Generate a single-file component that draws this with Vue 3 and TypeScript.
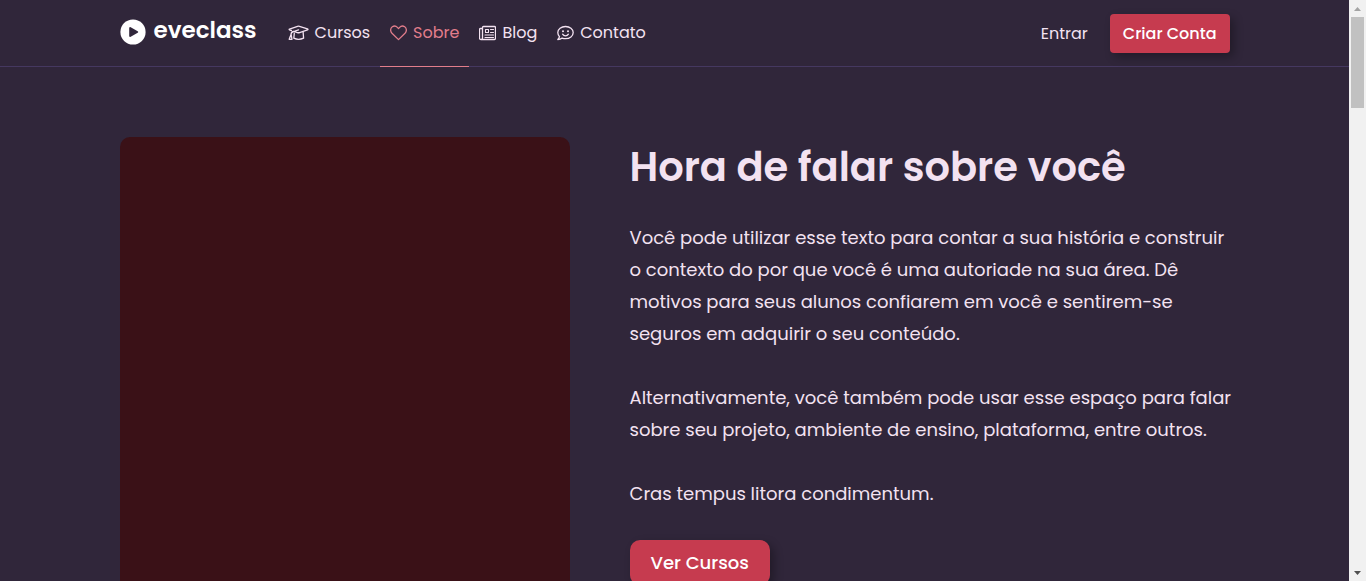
<script setup lang="ts">
interface NavItem {
  id: string
  label: string
  active: boolean
}

const navItems: NavItem[] = [
  { id: 'cursos', label: 'Cursos', active: false },
  { id: 'sobre', label: 'Sobre', active: true },
  { id: 'blog', label: 'Blog', active: false },
  { id: 'contato', label: 'Contato', active: false },
]

const paragraphs: string[][] = [
  [
    'Você pode utilizar esse texto para contar a sua história e construir',
    'o contexto do por que você é uma autoriade na sua área. Dê',
    'motivos para seus alunos confiarem em você e sentirem-se',
    'seguros em adquirir o seu conteúdo.',
  ],
  [
    'Alternativamente, você também pode usar esse espaço para falar',
    'sobre seu projeto, ambiente de ensino, plataforma, entre outros.',
  ],
  ['Cras tempus litora condimentum.'],
]
</script>

<template>
  <div class="shell">
    <div class="page">
      <header class="header">
        <div class="container bar">
          <a class="brand" href="#">
            <svg class="brand-mark" viewBox="0 0 26 26" aria-hidden="true">
              <circle cx="13" cy="13" r="12.6" fill="#fff" />
              <path d="M10.2 9v8l7-4z" fill="#30263a" stroke="#30263a" stroke-width="2" stroke-linejoin="round" />
            </svg>
            <span class="brand-name">eveclass</span>
          </a>

          <nav class="nav">
            <a
              v-for="item in navItems"
              :key="item.id"
              href="#"
              class="nav-link"
              :class="{ active: item.active }"
            >
              <svg v-if="item.id === 'cursos'" class="icon wide" viewBox="0 0 21 16" aria-hidden="true">
                <path d="M3.4 5.500Q.2 4.700 1.500 4.100L9.600 1.300q.9-.3 1.800 0l8.100 2.600q1 .5 0 1L11.600 7.600q-1.100.3-2.200 0L5.800 6.500 10.500 4.800" />
                <path d="M5.800 6.500Q3.100 6.800 3.100 9.300L1.200 14.300H4L3.100 9.300" />
                <path d="M6.300 8.200 5.800 13.200q4.700 2.300 9.800 0L15.100 7" />
              </svg>
              <svg v-else-if="item.id === 'sobre'" class="icon" viewBox="0 0 17 16" aria-hidden="true">
                <path d="M8.500 14.600 2 8.300C-.1 6.100.4 3.100 2.300 1.800c1.700-1.100 3.800-.8 5.100.6l1.100 1.200 1.100-1.200c1.300-1.400 3.400-1.700 5.100-.6 1.900 1.300 2.400 4.300.3 6.500z" />
              </svg>
              <svg v-else-if="item.id === 'blog'" class="icon" viewBox="0 0 17 16" aria-hidden="true">
                <path d="M4.500 1.500h11q1 0 1 1v11q0 1-1 1H2q-1.500 0-1.500-1.500V4.500q0-1 1-1h2v-1q0-1 1-1M3.500 3.500V13q0 1.500-1.500 1.500" />
                <path class="fine" d="M6.500 4.500h3v3h-3zM11.500 4.500h3M11.500 7.500h3M6 10h8.500M6 12.500h8.500" />
              </svg>
              <svg v-else class="icon" viewBox="0 0 17 16" aria-hidden="true">
                <path d="M8.500 1.500c4.300 0 7.700 2.700 7.700 6.100s-3.400 6.100-7.700 6.100c-1.200 0-2.300-.2-3.300-.6-1 .8-2.500 1.500-4.400 1.500 1-.9 1.500-1.900 1.700-2.900C1.400 10.600.8 9.100.8 7.600c0-3.400 3.400-6.100 7.700-6.100z" />
                <path d="M5.600 9.200c1.400 2.100 4.400 2.100 5.800 0" />
                <circle class="eye" cx="6" cy="6.200" r="1" />
                <circle class="eye" cx="11" cy="6.200" r="1" />
              </svg>
              <span>{{ item.label }}</span>
            </a>
          </nav>

          <div class="account">
            <a class="login" href="#">Entrar</a>
            <button class="btn signup" type="button">Criar Conta</button>
          </div>
        </div>
      </header>

      <main class="container about">
        <div class="photo"></div>
        <section class="copy">
          <h1>Hora de falar sobre você</h1>
          <p v-for="(lines, i) in paragraphs" :key="i">
            <template v-for="(line, j) in lines" :key="j"><br v-if="j > 0" />{{ line }}</template>
          </p>
          <button class="btn courses" type="button">Ver Cursos</button>
        </section>
      </main>
    </div>

    <div class="scrollbar" aria-hidden="true">
      <svg class="arrow" viewBox="0 0 17 17"><path d="M5 11h7L8.500 7z" fill="#a3a3a3" /></svg>
      <div class="thumb"></div>
      <svg class="arrow last" viewBox="0 0 17 17"><path d="M5 7h7l-3.500 4z" fill="#505050" /></svg>
    </div>
  </div>
</template>

<style>
body {
  margin: 0;
  background: #30263a;
}
</style>

<style scoped>
.shell {
  display: flex;
  height: 100vh;
  overflow: hidden;
  background: #30263a;
  color: #f3e2f1;
  font-family: Poppins, Inter, "Open Sans", sans-serif;
  font-size: 16px;
}

.page {
  flex: 1;
  min-width: 0;
  overflow: hidden;
}

.container {
  box-sizing: border-box;
  max-width: 1110px;
  margin: 0 auto;
}

.header {
  border-bottom: 1px solid #453860;
}

.bar {
  display: flex;
  height: 66px;
}

a {
  color: inherit;
  text-decoration: none;
}

.brand {
  display: flex;
  align-items: center;
  gap: 8px;
  height: 64px;
  margin-right: 21px;
  color: #fff;
}

.brand-mark {
  width: 26px;
  height: 26px;
}

.brand-name {
  padding-bottom: 4px;
  font-size: 23px;
  font-weight: 600;
  line-height: 28px;
}

.nav {
  display: flex;
}

.nav-link {
  display: flex;
  align-items: center;
  gap: 6px;
  height: 65px;
  padding: 0 10px 1px;
  border-bottom: 1px solid transparent;
  margin-bottom: -1px;
}

.nav-link.active {
  color: #e27d8b;
  border-bottom-color: #e27d8b;
}

.icon {
  width: 17px;
  height: 16px;
  fill: none;
  stroke: currentColor;
  stroke-width: 1.3;
  stroke-linejoin: round;
  stroke-linecap: round;
}

.icon.wide {
  width: 21px;
}

.fine {
  stroke-width: 1.1;
}

.eye {
  fill: currentColor;
  stroke: none;
}

.account {
  display: flex;
  align-items: center;
  gap: 22px;
  margin-left: auto;
}

.btn {
  border: 0;
  background: #c63b4f;
  color: #fff;
  font-family: inherit;
  font-weight: 500;
  box-shadow: 4px 4px 10px rgba(0, 0, 0, 0.3);
  cursor: pointer;
}

.signup {
  height: 39px;
  padding: 0 13px;
  border-radius: 4px;
  font-size: 16px;
}

.about {
  display: grid;
  grid-template-columns: minmax(0, 3fr) minmax(0, 4fr);
  gap: 60px;
  padding-top: 70px;
}

.photo {
  min-height: 600px;
  border-radius: 10px;
  background: #3a1117;
}

.copy {
  font-size: 18px;
  line-height: 32px;
  white-space: nowrap;
}

h1 {
  margin: 0 0 25px;
  font-size: 40px;
  font-weight: 600;
  line-height: 60px;
}

p {
  margin: 0 0 32px;
}

p:last-of-type {
  margin-bottom: 30px;
}

.courses {
  height: 45px;
  padding: 0 21px;
  border-radius: 10px;
  font-size: 18px;
}

.scrollbar {
  display: flex;
  flex-direction: column;
  width: 17px;
  background: #f1f1f1;
}

.arrow {
  width: 17px;
  height: 17px;
}

.arrow.last {
  margin-top: auto;
}

.thumb {
  height: 91px;
  margin: 0 2px;
  background: #c1c1c1;
}
</style>
